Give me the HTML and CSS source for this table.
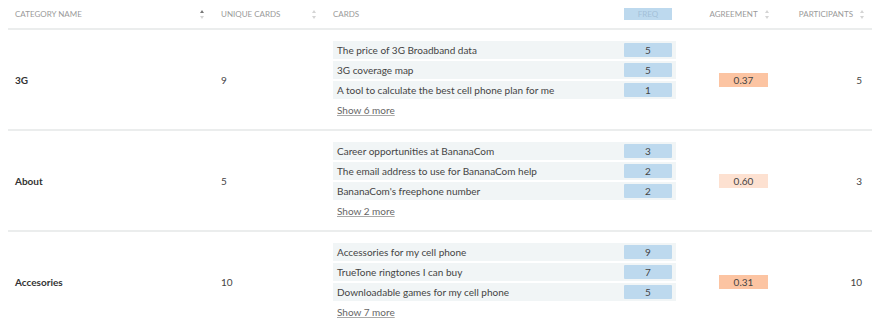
FILE: index.html
```html
<!DOCTYPE html>
<html lang="en">
<head>
    <meta charset="UTF-8">
    <title>Categories</title>
    <link rel="stylesheet" href="styles.css">
</head>
<body>
    <table class="results">
        <thead>
            <tr>
                <th class="col-name">
                    <span class="head"><span>Category name</span><span class="sort asc"></span></span>
                </th>
                <th class="col-unique">
                    <span class="head"><span>Unique cards</span><span class="sort"></span></span>
                </th>
                <th class="col-cards">
                    <div class="cards-head">
                        <span>Cards</span>
                        <span class="freq-head">Freq</span>
                    </div>
                </th>
                <th class="col-agree">
                    <span class="head inline"><span>Agreement</span><span class="sort"></span></span>
                </th>
                <th class="col-part">
                    <span class="head inline"><span>Participants</span><span class="sort"></span></span>
                </th>
            </tr>
        </thead>
        <tbody>
            <tr>
                <td class="name">3G</td>
                <td>9</td>
                <td class="col-cards">
                    <div class="cell-cards">
                        <div class="cards">
                            <div class="card"><span>The price of 3G Broadband data</span><span class="freq">5</span></div>
                            <div class="card"><span>3G coverage map</span><span class="freq">5</span></div>
                            <div class="card"><span>A tool to calculate the best cell phone plan for me</span><span class="freq">1</span></div>
                        </div>
                        <a class="more" href="#">Show 6 more</a>
                    </div>
                </td>
                <td class="col-agree"><span class="agree high">0.37</span></td>
                <td class="col-part">5</td>
            </tr>
            <tr>
                <td class="name">About</td>
                <td>5</td>
                <td class="col-cards">
                    <div class="cell-cards">
                        <div class="cards">
                            <div class="card"><span>Career opportunities at BananaCom</span><span class="freq">3</span></div>
                            <div class="card"><span>The email address to use for BananaCom help</span><span class="freq">2</span></div>
                            <div class="card"><span>BananaCom's freephone number</span><span class="freq">2</span></div>
                        </div>
                        <a class="more" href="#">Show 2 more</a>
                    </div>
                </td>
                <td class="col-agree"><span class="agree low">0.60</span></td>
                <td class="col-part">3</td>
            </tr>
            <tr>
                <td class="name">Accesories</td>
                <td>10</td>
                <td class="col-cards">
                    <div class="cell-cards">
                        <div class="cards">
                            <div class="card"><span>Accessories for my cell phone</span><span class="freq">9</span></div>
                            <div class="card"><span>TrueTone ringtones I can buy</span><span class="freq">7</span></div>
                            <div class="card"><span>Downloadable games for my cell phone</span><span class="freq">5</span></div>
                        </div>
                        <a class="more" href="#">Show 7 more</a>
                    </div>
                </td>
                <td class="col-agree"><span class="agree high">0.31</span></td>
                <td class="col-part">10</td>
            </tr>
        </tbody>
    </table>
</body>
</html>
```

FILE: styles.css
```css
body {
    margin: 0 8px;
    background: #fff;
    font-family: Lato, "Open Sans", sans-serif;
    font-size: 10px;
    color: #444;
}

.results {
    width: 864px;
    border-collapse: collapse;
    table-layout: fixed;
}

.results th,
.results td {
    padding: 0 0 0 7px;
    text-align: left;
    vertical-align: middle;
}

.results th {
    height: 28px;
    font-weight: normal;
    font-size: 8px;
    text-transform: uppercase;
    color: #9a9a9a;
    border-bottom: 2px solid #ebeded;
}

.results td {
    height: 99px;
    border-bottom: 2px solid #ebeded;
}

.col-name { width: 199px; }
.col-unique { width: 105px; }
.col-cards { width: 357px; }
.col-agree { width: 93px; }
.col-part { width: 68px; }

.results .col-agree {
    text-align: center;
}

.col-agree .head {
    margin-right: 8px;
}

.results .col-part {
    text-align: right;
    padding-right: 14px;
}

.results th.col-part {
    padding-right: 11px;
}

.head {
    display: flex;
    justify-content: space-between;
    align-items: center;
}

.head.inline {
    display: inline-flex;
    gap: 7px;
}

.sort {
    display: inline-block;
    width: 5px;
    height: 9px;
    position: relative;
    margin-right: 9px;
}

.head.inline .sort {
    margin-right: 0;
}

.sort::before,
.sort::after {
    content: "";
    position: absolute;
    left: 0;
    border-left: 2.5px solid transparent;
    border-right: 2.5px solid transparent;
}

.sort::before {
    top: 0;
    border-bottom: 3.5px solid #d4d4d4;
}

.sort::after {
    bottom: 0;
    border-top: 3.5px solid #d4d4d4;
}

.sort.asc::before {
    border-bottom-color: #777;
}

.cards-head {
    width: 343px;
    display: flex;
    justify-content: space-between;
    align-items: center;
}

.freq-head {
    width: 48px;
    margin-right: 4px;
    height: 12px;
    line-height: 12px;
    text-align: center;
    background: #bdd9ee;
    color: #a3c0d8;
}

.name {
    font-weight: bold;
    color: #333;
}

.cell-cards {
    display: flex;
    flex-direction: column;
    align-items: flex-start;
    padding-bottom: 2px;
}

.cards {
    width: 343px;
    display: flex;
    flex-direction: column;
    gap: 2px;
}

.card {
    height: 18px;
    display: flex;
    justify-content: space-between;
    align-items: center;
    padding-left: 4px;
    background: #f1f5f6;
    color: #444;
}

.freq {
    width: 48px;
    height: 14px;
    line-height: 14px;
    margin-right: 4px;
    text-align: center;
    background: #bdd9ee;
    border-radius: 1px;
    color: #444;
}

.more {
    margin: 5px 0 0 4px;
    line-height: 12px;
    color: #666;
    text-decoration: underline;
    text-decoration-color: #aaa;
}

.agree {
    display: inline-block;
    width: 49px;
    height: 14px;
    line-height: 14px;
    text-align: center;
    color: #444;
}

.agree.high {
    background: #fcc4a2;
}

.agree.low {
    background: #fde1d1;
}
```
